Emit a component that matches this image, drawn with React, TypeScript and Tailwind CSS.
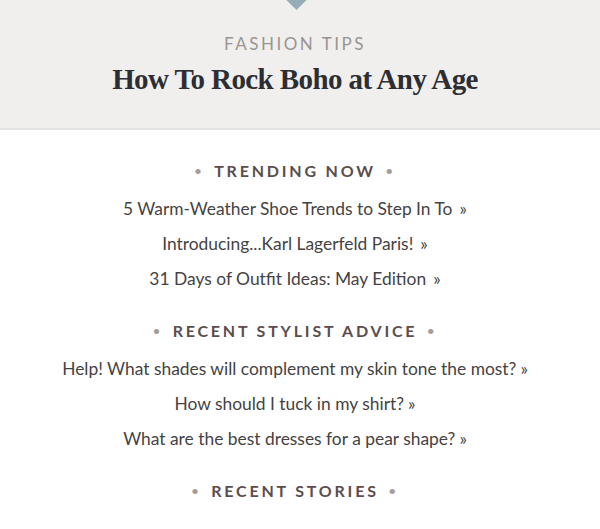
const trending = [
  "5 Warm-Weather Shoe Trends to Step In To",
  "Introducing...Karl Lagerfeld Paris!",
  "31 Days of Outfit Ideas: May Edition",
];

const advice = [
  "Help! What shades will complement my skin tone the most?",
  "How should I tuck in my shirt?",
  "What are the best dresses for a pear shape?",
];

function SectionHeading({ title }: { title: string }) {
  return (
    <h3 className="flex items-center justify-center gap-[10px] text-[16px] leading-6 font-bold tracking-[2.8px] text-[#5b4d4d] uppercase">
      <span className="text-[#a39d9b] text-[12px]">•</span>
      <span>{title}</span>
      <span className="text-[#a39d9b] text-[12px]">•</span>
    </h3>
  );
}

function LinkList({ items, wide }: { items: string[]; wide?: boolean }) {
  return (
    <ul className="flex flex-col gap-[11px] mt-[14px]">
      {items.map((item) => (
        <li key={item} className="text-[17.4px] leading-6 text-[#454343]">
          <a href="#">
            {item}
            <span className={wide ? "ml-[7px]" : "ml-[4px]"}>»</span>
          </a>
        </li>
      ))}
    </ul>
  );
}

export default function App() {
  return (
    <div className="w-[600px] h-[529px] overflow-hidden bg-white font-['Lato','Open_Sans',sans-serif] text-center">
      <header className="relative bg-[#f0efed] border-b-2 border-[#e4e3e1] h-[130px] pt-[34px] pr-[10px]">
        <div className="absolute left-[289px] top-[-8px] w-[15px] h-[15px] rotate-45 bg-[#94adb9]" />
        <p className="text-[17px] leading-5 tracking-[2.5px] text-[#9a9491] uppercase">Fashion Tips</p>
        <h1 className="mt-[7px] text-[29px] leading-9 font-bold tracking-[-0.6px] text-[#2c2e33] font-['Liberation_Serif','DejaVu_Serif',serif]">
          How To Rock Boho at Any Age
        </h1>
      </header>
      <main className="pt-[29px] pr-[10px]">
        <section>
          <SectionHeading title="Trending Now" />
          <LinkList items={trending} wide />
        </section>
        <section className="mt-[28px]">
          <SectionHeading title="Recent Stylist Advice" />
          <LinkList items={advice} />
        </section>
        <section className="mt-[28px]">
          <SectionHeading title="Recent Stories" />
        </section>
      </main>
    </div>
  );
}
